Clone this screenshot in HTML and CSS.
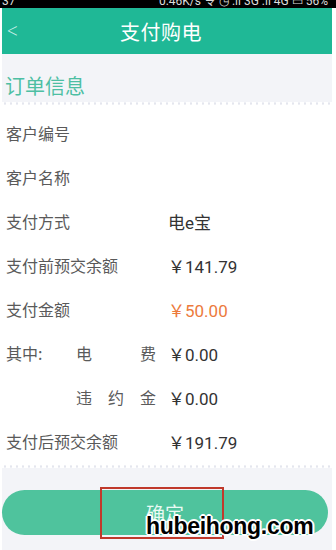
FILE: index.html
```html
<!DOCTYPE html>
<html lang="zh-CN">
<head>
    <meta charset="UTF-8">
    <meta name="viewport" content="width=device-width, initial-scale=1.0">
    <title>支付购电</title>
    <link rel="stylesheet" href="styles.css">
</head>
<body>

    <div class="statusbar">
        <span>37</span>
        <span>0.46K/s 令 ◷ .ıl 3G .ıl 4G ▭ 56%</span>
    </div>

    <div class="app">
        <div class="header">
            <span class="back">&lt;</span>
            <span class="title">支付购电</span>
        </div>

        <div class="section-title">订单信息</div>

        <div class="card">
            <div class="row"><span class="label">客户编号</span><span class="value"></span></div>
            <div class="row"><span class="label">客户名称</span><span class="value"></span></div>
            <div class="row"><span class="label">支付方式</span><span class="value">电e宝</span></div>
            <div class="row"><span class="label">支付前预交余额</span><span class="value">￥141.79</span></div>
            <div class="row"><span class="label">支付金额</span><span class="value orange">￥50.00</span></div>
            <div class="row">
                <span class="label"><span class="lead">其中:</span><span class="sub"><span>电</span><span>费</span></span></span>
                <span class="value">￥0.00</span>
            </div>
            <div class="row">
                <span class="label"><span class="lead"></span><span class="sub"><span>违</span><span>约</span><span>金</span></span></span>
                <span class="value">￥0.00</span>
            </div>
            <div class="row"><span class="label">支付后预交余额</span><span class="value">￥191.79</span></div>
        </div>

        <div class="actions">
            <button class="btn">确定</button>
            <div class="highlight"></div>
            <div class="watermark">hubeihong.com</div>
        </div>
    </div>

</body>
</html>
```

FILE: styles.css
```css
body {
    margin: 0;
    background-color: #ffffff;
    font-family: "Noto Sans CJK SC", "Noto Sans", sans-serif;
    overflow: hidden;
}

.statusbar {
    height: 8px;
    background-color: #000;
    color: #ddd;
    display: flex;
    justify-content: space-between;
    padding: 0 8px 0 2px;
    font-family: Roboto, sans-serif;
    font-size: 12px;
    line-height: 2px;
    overflow: hidden;
}

.app {
    width: 330px;
    margin-left: 2px;
    background-color: #f3f4f8;
    height: 542px;
}

.header {
    height: 46px;
    background-color: #1fb896;
    color: #fff;
    display: flex;
    align-items: center;
    justify-content: center;
    position: relative;
}

.back {
    position: absolute;
    left: 2px;
    top: 10px;
    font-size: 20px;
    font-weight: 300;
    color: #c9efe6;
    font-family: "DejaVu Sans", sans-serif;
    transform: scaleX(0.7);
}

.title {
    font-size: 20px;
    margin-left: -12px;
    letter-spacing: 0.5px;
}

.section-title {
    color: #4dbfa3;
    font-size: 20px;
    height: 36px;
    line-height: 40px;
    padding: 12px 0 0 3px;
}

.card {
    background-color: #fff;
    padding: 9px 0 5px 4px;
    position: relative;
}

.card::before,
.card::after {
    content: "";
    position: absolute;
    left: 0;
    right: 0;
    height: 3px;
    background-image: radial-gradient(circle, #e4e6ee 1px, transparent 1.3px);
    background-size: 6px 3px;
}

.card::before {
    top: 0;
}

.card::after {
    bottom: 0;
}

.row {
    height: 44px;
    display: flex;
    align-items: center;
    font-size: 16px;
}

.label {
    width: 162px;
    color: #5a5a5a;
    display: flex;
}

.lead {
    width: 70px;
}

.sub {
    width: 80px;
    display: flex;
    justify-content: space-between;
}

.value {
    color: #333;
    font-family: Roboto, "Noto Sans CJK SC", sans-serif;
    font-size: 17px;
}

.orange {
    color: #ec7a3c;
}

.actions {
    position: relative;
    padding: 22px 4px 0 0;
}

.btn {
    width: 326px;
    height: 45px;
    border: none;
    border-radius: 23px;
    background-color: #4fc39d;
    color: #eafaf4;
    font-size: 19px;
    font-family: "Noto Sans CJK SC", sans-serif;
    padding: 0;
    display: block;
}

.highlight {
    position: absolute;
    left: 98px;
    top: 19px;
    width: 120px;
    height: 48px;
    border: 2px solid #c0392b;
}

.watermark {
    position: absolute;
    left: 144px;
    top: 45px;
    font-family: "Liberation Sans", Arial, sans-serif;
    font-weight: bold;
    font-size: 23px;
    color: #000;
    letter-spacing: -0.3px;
    text-shadow: 2px 0 #fff, -2px 0 #fff, 0 2px #fff, 0 -2px #fff, 1px 1px #fff, -1px -1px #fff, 1px -1px #fff, -1px 1px #fff;
}
```
